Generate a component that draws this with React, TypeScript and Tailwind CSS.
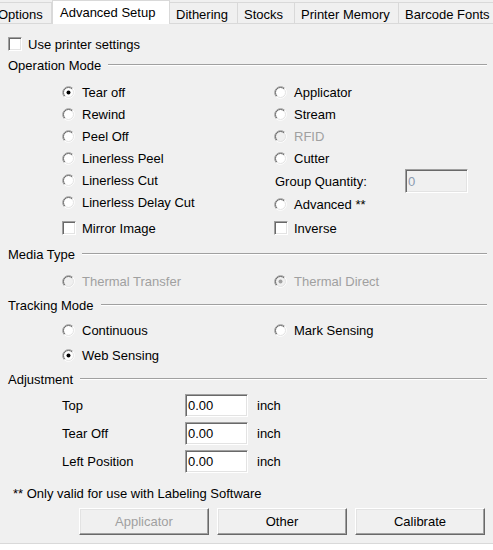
import React from "react";

function Radio({ checked = false, disabled = false }: { checked?: boolean; disabled?: boolean }) {
  return (
    <svg width="13" height="13" viewBox="0 0 13 13" className="shrink-0">
      <circle cx="6.5" cy="6.5" r="5.5" fill={disabled ? "#f0f0f0" : "#ffffff"} />
      <path d="M2.26 10.74 A6 6 0 0 1 10.74 2.26" fill="none" stroke="#a0a0a0" strokeWidth="1" />
      <path d="M10.74 2.26 A6 6 0 0 1 2.26 10.74" fill="none" stroke="#ffffff" strokeWidth="1" />
      <path d="M2.96 10.04 A5 5 0 0 1 10.04 2.96" fill="none" stroke="#696969" strokeWidth="1" />
      <path d="M10.04 2.96 A5 5 0 0 1 2.96 10.04" fill="none" stroke="#e3e3e3" strokeWidth="1" />
      {checked && <circle cx="6.5" cy="6.5" r="2" fill={disabled ? "#a0a0a0" : "#000000"} />}
    </svg>
  );
}

function Check() {
  return (
    <div className="h-[14px] w-[14px] shrink-0 border border-b-white border-l-[#a0a0a0] border-r-white border-t-[#a0a0a0] bg-white shadow-[inset_1px_1px_0_#696969,inset_-1px_-1px_0_#e3e3e3]" />
  );
}

function RadioItem({ label, checked, disabled }: { label: string; checked?: boolean; disabled?: boolean }) {
  return (
    <div className="flex h-[22px] items-center gap-[7px]">
      <Radio checked={checked} disabled={disabled} />
      <span className={disabled ? "text-[#a0a0a0]" : "text-black"}>{label}</span>
    </div>
  );
}

function GroupHeader({ title, className }: { title: string; className: string }) {
  return (
    <div className={className}>
      <span>{title}</span>
      <div className="ml-[7px] h-[2px] flex-1 border-t border-[#a0a0a0] bg-white" />
    </div>
  );
}

function Field({ value }: { value: string }) {
  return (
    <div className="flex h-[23px] w-[63px] items-center border border-b-white border-l-[#a0a0a0] border-r-white border-t-[#a0a0a0] bg-white pl-[2px] shadow-[inset_1px_1px_0_#696969,inset_-1px_-1px_0_#e3e3e3]">
      {value}
    </div>
  );
}

function Btn({ label, disabled }: { label: string; disabled?: boolean }) {
  return (
    <div
      className={
        "flex h-[27px] w-[130px] items-center justify-center border border-b-[#696969] border-l-white border-r-[#696969] border-t-white bg-[#f0f0f0] shadow-[inset_-1px_-1px_0_#a0a0a0,inset_1px_1px_0_#e3e3e3] " +
        (disabled ? "text-[#a0a0a0]" : "text-black")
      }
    >
      {label}
    </div>
  );
}

const tabs = [
  { label: "Options", w: "w-[60px]", active: false },
  { label: "Advanced Setup", w: "w-[118px]", active: true },
  { label: "Dithering", w: "w-[68px]", active: false },
  { label: "Stocks", w: "w-[57px]", active: false },
  { label: "Printer Memory", w: "w-[104px]", active: false },
  { label: "Barcode Fonts", w: "w-[110px]", active: false },
];

export default function App() {
  return (
    <div className="h-[550px] w-[493px] overflow-hidden bg-[#f0f0f0] text-[13px] leading-[15px] text-black [font-family:'Liberation_Sans',Arial,sans-serif]">
      {/* tab strip */}
      <div className="flex h-[24px] items-end border-b border-[#d9d9d9] bg-[#f0f0f0]">
        <div className="-ml-[8px] flex items-end">
          {tabs.map((t) =>
            t.active ? (
              <div
                key={t.label}
                className={"relative z-10 -mb-[1px] flex h-[24px] shrink-0 items-start border-x border-t border-[#d9d9d9] bg-white pl-[7px] pt-[4px] " + t.w}
              >
                {t.label}
              </div>
            ) : (
              <div
                key={t.label}
                className={"flex h-[21px] shrink-0 items-center border-r border-t border-[#d9d9d9] bg-[#f0f0f0] pl-[6px] pt-[2px] " + t.w}
              >
                <span className="whitespace-nowrap">{t.label}</span>
              </div>
            )
          )}
        </div>
      </div>

      <div className="flex flex-col">
        <div className="mt-[10px] flex h-[20px] items-center gap-[6px] pl-[8px]">
          <Check />
          <span>Use printer settings</span>
        </div>

        <GroupHeader title="Operation Mode" className="mt-[1px] flex h-[20px] items-center pl-[8px] pr-[6px]" />

        <div className="mt-[6px] flex pl-[62px]">
          <div className="flex w-[212px] flex-col">
            <RadioItem label="Tear off" checked />
            <RadioItem label="Rewind" />
            <RadioItem label="Peel Off" />
            <RadioItem label="Linerless Peel" />
            <RadioItem label="Linerless Cut" />
            <RadioItem label="Linerless Delay Cut" />
            <div className="mt-[4px] flex h-[22px] items-center gap-[6px]">
              <Check />
              <span>Mirror Image</span>
            </div>
          </div>
          <div className="flex flex-col">
            <RadioItem label="Applicator" />
            <RadioItem label="Stream" />
            <RadioItem label="RFID" disabled />
            <RadioItem label="Cutter" />
            <div className="flex h-[24px] items-center pl-[1px]">
              <span className="w-[130px]">Group Quantity:</span>
              <div className="flex h-[24px] w-[63px] items-center border border-b-white border-l-[#a0a0a0] border-r-white border-t-[#a0a0a0] bg-[#f0f0f0] pl-[2px] text-[#8a9bb0] shadow-[inset_1px_1px_0_#696969,inset_-1px_-1px_0_#e3e3e3]">
                0
              </div>
            </div>
            <RadioItem label="Advanced **" />
            <div className="mt-[2px] flex h-[22px] items-center gap-[6px]">
              <Check />
              <span>Inverse</span>
            </div>
          </div>
        </div>

        <GroupHeader title="Media Type" className="mt-[5px] flex h-[20px] items-center pl-[8px] pr-[6px]" />
        <div className="mt-[6px] flex pl-[62px]">
          <div className="w-[212px]">
            <RadioItem label="Thermal Transfer" disabled />
          </div>
          <RadioItem label="Thermal Direct" checked disabled />
        </div>

        <GroupHeader title="Tracking Mode" className="mt-[3px] flex h-[20px] items-center pl-[8px] pr-[6px]" />
        <div className="mt-[3px] flex h-[24px] items-center pl-[62px]">
          <div className="w-[212px]">
            <RadioItem label="Continuous" />
          </div>
          <RadioItem label="Mark Sensing" />
        </div>
        <div className="mt-[1px] flex h-[24px] items-center pl-[62px]">
          <RadioItem label="Web Sensing" checked />
        </div>

        <GroupHeader title="Adjustment" className="mt-[2px] flex h-[20px] items-center pl-[8px] pr-[6px]" />
        <div className="mt-[5px] flex h-[23px] items-center pl-[62px]">
          <span className="w-[123px]">Top</span>
          <Field value="0.00" />
          <span className="ml-[9px]">inch</span>
        </div>
        <div className="mt-[5px] flex h-[23px] items-center pl-[62px]">
          <span className="w-[123px]">Tear Off</span>
          <Field value="0.00" />
          <span className="ml-[9px]">inch</span>
        </div>
        <div className="mt-[5px] flex h-[23px] items-center pl-[62px]">
          <span className="w-[123px]">Left Position</span>
          <Field value="0.00" />
          <span className="ml-[9px]">inch</span>
        </div>

        <div className="mt-[10px] flex h-[20px] items-center pl-[13px]">
          ** Only valid for use with Labeling Software
        </div>

        <div className="mt-[5px] flex gap-[8px] pl-[79px]">
          <Btn label="Applicator" disabled />
          <Btn label="Other" />
          <Btn label="Calibrate" />
        </div>

        <div className="mt-[8px] h-[10px] border-t border-[#d9d9d9] bg-white" />
      </div>
    </div>
  );
}
